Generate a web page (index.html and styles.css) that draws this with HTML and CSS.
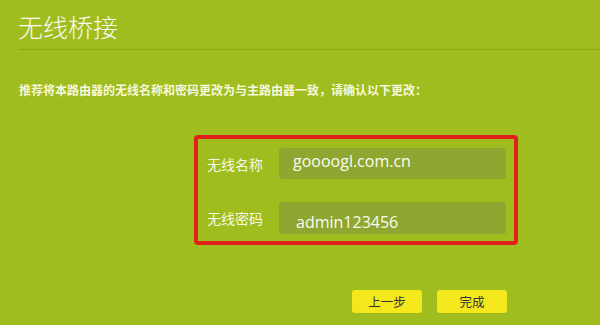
FILE: index.html
```html
<!DOCTYPE html>
<html lang="zh-CN">
<head>
<meta charset="UTF-8">
<title>无线桥接</title>
<link rel="stylesheet" href="styles.css">
</head>
<body>

<div class="page">
    <h1 class="page-title">无线桥接</h1>
    <p class="page-tip">推荐将本路由器的无线名称和密码更改为与主路由器一致，请确认以下更改：</p>

    <div class="confirm-box">
        <div class="form-row">
            <label class="form-label">无线名称</label>
            <div class="form-input input-ssid">goooogl.com.cn</div>
        </div>
        <div class="form-row">
            <label class="form-label">无线密码</label>
            <div class="form-input input-pwd">admin123456</div>
        </div>
    </div>

    <div class="button-bar">
        <button class="btn">上一步</button>
        <button class="btn">完成</button>
    </div>
</div>

</body>
</html>
```

FILE: styles.css
```css
html {
    box-sizing: border-box;
}

*, *:before, *:after {
    box-sizing: inherit;
}

body {
    margin: 0;
    background: #9fbd1f;
    font-family: "Noto Sans CJK SC", "Open Sans", sans-serif;
    color: #fbfbe8;
}

.page {
    width: 600px;
    height: 325px;
    overflow: hidden;
}

.page-title {
    margin: 0 0 0 18px;
    padding-top: 9px;
    height: 50px;
    border-bottom: 1px solid #8ba81b;
    font-size: 25px;
    font-weight: 300;
    line-height: 34px;
    color: #fafaf0;
}

.page-tip {
    margin: 32px 0 0 19px;
    font-size: 12px;
    font-weight: bold;
    line-height: 16px;
    color: #f6f8dc;
}

.confirm-box {
    margin: 37px 0 0 194px;
    width: 324px;
    height: 110px;
    border: 4px solid #e3211b;
    border-radius: 4px;
    padding: 9px 8px 0 9px;
}

.form-row {
    display: flex;
    align-items: center;
    margin-bottom: 23px;
}

.form-label {
    width: 72px;
    font-size: 14px;
    color: #f6f8e4;
}

.form-input {
    width: 227px;
    height: 31px;
    border-radius: 3px;
    background: #8fa730;
    font-family: "Open Sans", sans-serif;
    font-size: 16px;
    color: #fbfbf0;
    padding-left: 14px;
    line-height: 26px;
}

.input-pwd {
    height: 32px;
    padding-left: 17px;
    line-height: 40px;
}

.button-bar {
    display: flex;
    gap: 15px;
    margin: 45px 0 0 352px;
}

.btn {
    width: 70px;
    height: 23px;
    border: none;
    border-radius: 3px;
    background: #f4e81c;
    font-family: "Noto Sans CJK SC", sans-serif;
    font-size: 12.5px;
    color: #333;
    padding: 0;
}
```
